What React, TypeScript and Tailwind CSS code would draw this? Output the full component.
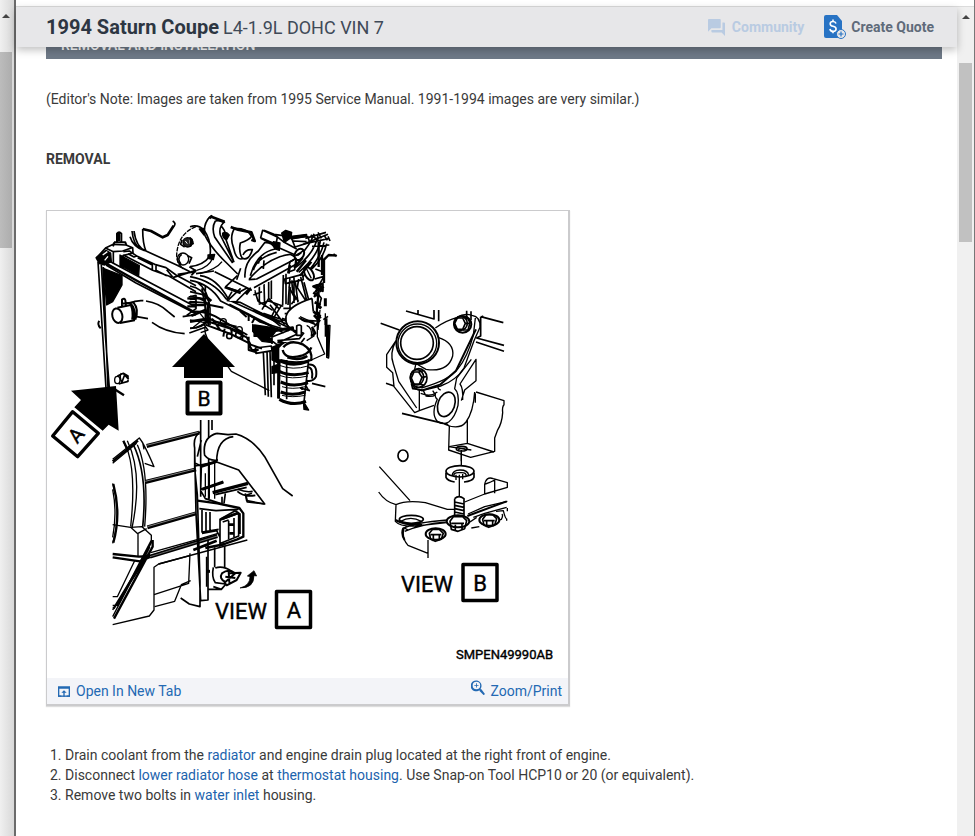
import type { ReactNode } from "react";

type PartProps = { x: number; y: number; children: ReactNode };

// Every part of the drawing is on its own grid, three units to a pixel
function Part({ x, y, children }: PartProps) {
  return (
    <g transform={`translate(${x} ${y}) scale(0.33333)`} strokeWidth={4}>
      {children}
    </g>
  );
}

function Radiator() {
  return (
    <Part x={46} y={205}>
      <path d="M213 110V86q6-8 13 0v24M204 112h34l3 8M205 112l-4 12M219 82v26" strokeWidth={6} />
      <path d="M152 158l28-30 22-10 38 2 20 8 1 16-30 8v30M180 130l22 10 28-2 28-10M202 140v35" strokeWidth={5} />
      <path d="M150 158l30-22 14 8 2 26-20 10-16-4z" fill="#000" />
      <path d="M170 150l14-10M176 166l10-12" stroke="#fff" strokeWidth={4} />
      <path d="M172 190l56 22v28l-14 25-14 25-18 10z" fill="#000" />
      <path d="M222 150l58 32-2 30-38-22-18-5z" fill="#000" />
      <path d="M156 170l14 220 10 160M166 180l12 210 12 160M172 186l14 364" strokeWidth={5} />
      <path d="M160 348q-8 10 4 22" strokeWidth={6} />
      <path d="M232 140l18-2 24 16 52 24 34 10 30 22 60 32M232 150l88 46 50 18 80 46M246 146l18 10 10-4M275 158l44 22v14M330 182v14l32 16M362 194l18 22" strokeWidth={5} />
      <path d="M185 166l265 140M180 180l90 54 180 92" strokeWidth={5} />
      <path d="M178 174l92 52 180 98" strokeWidth={7} />
      <path d="M290 72l25 6 35 19 15-7 18-28" strokeWidth={8} />
      <path d="M380 48q12 7 3 16M290 72q0 44 10 66M264 78q6 48 36 60l92 42 40 20M252 95q10 32 44 42M258 78q4 40 24 52" strokeWidth={5} />
      <path d="M450 65q-54 20-58 84 0 28 20 42" strokeDasharray="14 3" />
      <ellipse cx="425" cy="112" rx="14" ry="14" fill="#222" />
      <path d="M408 104l-4 14 12 8M436 102l6 16" strokeWidth={5} />
      <path d="M418 108l6 8M430 104l2 12" stroke="#fff" strokeWidth={3} />
      <ellipse cx="411" cy="162" rx="17" ry="18" />
      <path d="M405 178q-14-18 2-30M425 152l12 6-8 18M395 208l55-8M380 218l70-22M430 185l20 12-14 14" strokeWidth={5} />
      <ellipse cx="214" cy="332" rx="15" ry="22" transform="rotate(-14 214 332)" strokeWidth={6} />
      <path d="M214 308l40-8M222 354l44-8M250 292q24 22 14 56M262 292q18 20 6 52M228 304v-20q8-6 10 2l2 14M226 296l40-4" strokeWidth={6} />
      <path d="M256 300q8 20 4 44" strokeWidth={9} />
      <path d="M250 295q20-10 42-8M300 288q40 6 66 32l20 16M272 335l34 6M318 352q40 30 98 34M430 384l50-18M410 335l40-6M428 276l22-5v40l-28 20" strokeWidth={5} />
      <path d="M424 280l26 2M428 292h24M424 304h26" strokeWidth={7} />
    </Part>
  );
}

function Engine() {
  return (
    <Part x={190} y={205}>
      {/* fuel rail */}
      <path d="M0 215q70 12 108 66l196 90M0 226q60 10 92 62l190 96M0 243q38 6 56 46l-4 50M20 230q36 26 40 80v50M0 260l52 12M0 274l48 8M0 290l56 4M46 240v110M110 286l40 6 120 60M118 298l130 66" strokeWidth={5} />
      <path d="M0 282q40-10 54 20v50M0 320q40-4 76 14l96 56M0 370q36 0 60-28l90 40M150 318l20 18M176 330v18M196 336l-10 18M36 250l20 110M60 300l40 8" strokeWidth={6} />
      <circle cx="100" cy="350" r="9" />
      <circle cx="148" cy="374" r="9" />
      <path d="M4 300h44M4 332l44-18M40 268l24 20M0 350l60-10" strokeWidth={8} />
      <path d="M194 360l70 10-18 24h-54z" fill="#000" />
      {/* block and brackets */}
      <path d="M194 256l10 32 44 28M208 244v50M222 236l2 70M236 230v50l30 30M244 226v56M280 210l-2 90M288 206v92M190 270l26-10M206 298l30-10 44 16M236 280l-20 34M262 300l-20 40 30 24M280 310h24M284 326h20M276 340l24 8M300 246v80M250 340l24-38" strokeWidth={5} />
      <path d="M218 76l44 20-4 22-46-20zM212 100l46 22M222 76l30 12 44 6M250 120l20 10 46 20M260 94l20 16 40 22M305 100l48-6 6 18-44 14zM310 108l40 2" strokeWidth={5} />
      <path d="M250 110l20 4-2 22-18-6zM302 94l48-6-2 6-44 8z" fill="#000" />
      {/* covers under the runners */}
      <path d="M18 208l50-12 60 0 56 36 10 28-40 26-34 2-38-42z" fill="#fff" stroke="none" />
      <path d="M18 206l54-8M30 212q50 6 86 72M74 200l112 56M142 212l-34 32M152 250l-36 34M176 252l-36 36M106 246l44 14 22-12M112 284l14-24" strokeWidth={5} />
      <path d="M104 246l48 18M190 240l-22 28" strokeWidth={8} />
      {/* intake runners */}
      <path d="M60 35Q38 58 45 92q20 40 68 85l38 46 10-30-30-60-20-60-22-20z" fill="#fff" stroke="none" />
      <path d="M60 35Q38 58 45 92q20 40 68 85l30 30M76 48q-12 20-2 48l54 78M105 50q-20 14-14 40l40 80M92 62q16 14 14 36l26 74M76 48q12-4 24 4" strokeWidth={5} />
      <path d="M126 68q-14 30 0 66l16 60 20-34q-22-20-12-48l32-20-8-20z" fill="#fff" stroke="none" />
      <path d="M135 68q-18 26-4 62 8 40 30 30M135 70q40 0 50 24-8 12-34 20-6 28 6 46 20 8 30-26-20-2-28 16M152 190l-12 34" strokeWidth={5} />
      <path d="M165 222q-8-50 36-84l22-28q26 2 30 20l-8 30q60-24 72 2l-4 28-126 66z" fill="#fff" stroke="none" />
      <path d="M165 218q-4-48 40-80l20-26q24 0 30 20-56 12-74 80M190 196q10-38 70-54M178 222q56-66 122-74 24 8 18 30L192 248M176 224l24-2 112-58M205 176q2-12 10-20M222 166l-2 26" strokeWidth={5} />
      <path d="M60 34l44 16M122 66l22 8 40 8 10 26-10-4M58 40l10-8" strokeWidth={8} />
      {/* pulley on the left */}
      <path d="M0 65q24-8 42 10 24 34 18 78-20 28-60 32" strokeWidth={5} />
      <path d="M0 98q16 10 2 26zM54 150l20-2-4 16-16-4zM28 72l14-2v20z" fill="#000" />
      <path d="M98 84q12-6 20 6l-8 14q-14-4-12-20zM275 84l12-8 18 6-2 16-20 14z" fill="#000" />
      <path d="M20 196q36-8 48-36M30 206q50-14 66-36" strokeWidth={4} />
      {/* wiring loom */}
      <path d="M384 92q-10 54-68 96M392 104q-8 50-66 98M402 112q-12 54-64 104M372 86q-14 40-52 76M410 116q-10 48-54 84M340 118l74-30M346 100l62-18M356 114l62-14M366 124l52-4M362 90l24 16M384 82l10 18M402 90l10 16M414 94l6 14" strokeWidth={5} />
      <ellipse cx="328" cy="148" rx="13" ry="18" transform="rotate(30 328 148)" fill="#fff" strokeWidth={6} />
      <ellipse cx="357" cy="206" rx="12" ry="22" transform="rotate(-30 357 206)" fill="#fff" strokeWidth={6} />
      <path d="M350 192l14 28M322 152l12-8" />
      <path d="M316 152q20-10 24-16M300 170l18-10-4 34-20 8zM284 222l54-14 2 16-54 12zM300 216l-6 84M312 214v80M326 222l-4 26 26 40M316 232l8 60M332 216l18 70M296 244l20 38-12 16M306 226q-2 40 20 64M342 232l16 60M376 192l26 10v30M374 222l28-8-26 46 26-14M380 262l14 18-8 30" strokeWidth={5} />
      <path d="M440 152l-24-2-14 14v70M430 148l10 6M386 110v76M396 150v60M370 244l28-8v22zM372 276l14-16-6 60 12 20" strokeWidth={7} />
      <path d="M300 180l-4 26M312 188l26-30M320 200l28-34M330 212l34-42" strokeWidth={7} />
      <path d="M406 280v24M408 340v20M414 360v30M388 236l8 20M380 300l14 10" strokeWidth={9} />
      <path d="M366 280q-70 22-78 54-4 34 24 42l66-2 4-40z" fill="#fff" stroke="none" />
      <path d="M366 280q-70 22-78 54-4 34 24 40M326 338l60 24M366 280l4 40M346 346l36 2M386 320v30l-14 16M330 340q16 14 40 10M400 344l14-10" strokeWidth={5} />
      <path d="M376 240l18 20M370 262l18 14M374 292l18 8M370 320l22 14M372 330l18 20M244 378l64-10v22" strokeWidth={8} />
    </Part>
  );
}

function RadiatorEnd() {
  return (
    <Part x={190} y={320}>
      <path d="M18 24l22-12 14 18-22 8M44 22q0 38 34 66l46 66 114 58M0 0l46 8M10 22L40-2M30-20l24 30" strokeWidth={4} />
      <path d="M40 0l80 26 50 26 12 22 34 12M46 14l76 28 52 26 12 22h20M116 22q12 4 8 22M150 34q12 6 6 24M176 50v40l26 8M104 26l-4 24M80 6l60 14M66-4l26 36" strokeWidth={6} />
      <circle cx="118" cy="48" r="8" strokeWidth={5} />
      <circle cx="146" cy="44" r="9" strokeWidth={5} />
      <path d="M188 14l54 24 4 30-30-4-28-30z" fill="#000" />
      <path d="M196 84l48-6 2 14-48 8zM220 96l6 130M231 92l4 138M240 94l4 138M252 96v100M264 84v150" strokeWidth={5} />
      <path d="M262 62l66-6 14-18-20-12-58 20-24 6z" fill="#fff" stroke="none" />
      <path d="M240 36l64-10M244 52l60-24 18 14-58 26M262 62l66-6 14-18M262 68l70 2 12-16M302 28l40 12M240 58l26 20M246 36v36" strokeWidth={5} />
      <path d="M320 46V18q8-6 14 0v28z" fill="#fff" strokeWidth={5} />
      <path d="M170-20l40 26 86 26M190-30l100 42 10 14M220-20l70 24M240-46l44 60" strokeWidth={5} />
      <path d="M246 82l34-14v50l-14 12-20-10zM246 140l16-6v24l-16 2zM340 244l16 26-14-2z" fill="#000" />
      {/* ribbed tank */}
      <path d="M268 84q20-28 66-16 36 10 30 48l-8 10-10 116q-40 16-78-6z" fill="#fff" stroke="none" />
      <path d="M280 82q20-26 60-8 28 16 24 46-44 14-92 0M278 90q8 32 60 16 20-8 26-24M292 112q36 12 60-4" strokeWidth={7} />
      <path d="M268 122q40 20 86 2M268 154q36 18 88 4M272 186l16 6q30 8 66-4M272 216q34 14 74 0M268 238q40 22 80 6" strokeWidth={9} />
      <path d="M268 136q40 16 86 2M268 166q36 14 86 2M276 200q30 10 70 0M276 226q30 8 70 0" strokeWidth={3} />
      <path d="M268 118l-2 118" strokeWidth={8} />
      <path d="M356 118l-14 128M290 120v118M352 180l-2 14M366 190l40 10M330 204l30 8M346 194l10 18M336 200v10" strokeWidth={5} />
      <path d="M354 134q30-4 24 36-8 16-28 12M354 142q16 0 12 34" strokeWidth={6} />
      {/* bracket on the right */}
      <path d="M382-40v90l22 52-40 18M390-30l-6 60M406-20v70M410 16h10l-4 98-6-2zM350 16q18 8 14 34M366 24l6 24-22 14M330-10l44 20" />
      <path d="M366 20l10 20-12 8M414 20v90" strokeWidth={7} />
    </Part>
  );
}

function Arrows() {
  return (
    <>
      <Part x={46} y={330}>
        <path d="M75 182l135-14 8 134-30-18-18 18-85-70 20-22z" fill="#000" stroke="none" />
        <path d="M80 245l77 65-62 70-75-62z" strokeWidth={10} />
        <ellipse cx="214" cy="150" rx="8" ry="11" />
        <path d="M214 138l18-8 14 8v16l-28 8M226 130q-8 10 2 28M236 134l-8 22M232 130l16 18" strokeWidth={5} />
        <path d="M206 178l28 18" strokeWidth={7} />
      </Part>
      <path d="M204 334l31 33h-12v11h-39v-11h-12z" fill="#000" stroke="none" />
      <rect x="187.500" y="382.500" width="33" height="31" strokeWidth={4} />
    </>
  );
}

function ViewA() {
  return (
    <Part x={100} y={430}>
      {/* fan shroud */}
      <path d="M38 88L118 24l10 14M38 100L110 40M118 24q14 16 44 86l-28-10M128 38l4 20M70 34l14 30q24 76 8 226M82 32q48 100 14 262M112 44q36 80 22 246M38 160q28 90 0 180M38 178q14 70 0 144" />
      <path d="M70 32l14 30M38 94L114 32M40 162q24 90 0 176" strokeWidth={7} />
      <path d="M100 44q44 90 28 248" strokeWidth={5} />
      <path d="M38 284l54 8 22 20v66M92 292l34-2 28 26v22L38 560M38 584l110-26 14-18V412l14-10 266-72M114 310l26-14M154 330L52 526H38M104 392L52 500H38M130 398L38 540" />
      <path d="M38 372l78 8 36-2M38 382l82 12 32-14M148 350l-24 50L42 534H38M158 330v20L42 566" strokeWidth={7} />
      {/* radiator fins */}
      <path d="M140 48L298 8M136 156l152-38M142 292l146-42" strokeWidth={12} />
      <path d="M140 46L298 6M136 154l152-38M142 290l146-42" stroke="#bbb" strokeWidth={2} />
      <path d="M150 380l202-62" strokeWidth={12} />
      <path d="M150 380l202-62" stroke="#999" strokeWidth={2} />
      <path d="M152 368l142-40 60-18" />
      {/* side tank */}
      <path d="M302-30v230M326-30v240M336-30v30M302 4q-24 16-18 50v60l8 80 8 260v76l-32-8-26-18M284 60l4 190 14 262 22-2V330M292 80l12-50M286 108l70-14M302 178l68-22M286 100l18 8-2 74 14 24 56 18" strokeWidth={5} />
      <path d="M302 110l56-18M306 178l64-22" strokeWidth={9} />
      <path d="M316 130v70M328 96v110M344 86v120M270 370l-4 90-104 34M176 402l96-26M164 530l60-16 20-50 28-12" />
      {/* upper hose */}
      <path d="M350 10q-44 12-36 66 14 18 40 14l-4 6 66 24 34 44 106-30-36-70-36-40-50-12z" fill="#fff" stroke="none" />
      <path d="M350 10q-44 12-36 66 14 18 40 14M350 10l34 4 24-2q50 14 86 68l54 96 30 22M400 20q-50 6-50 76l66 24 34 44 44 58-52-6-4-20 18-6M346 194l94-22" strokeWidth={5} />
      <path d="M338 188l106-28" strokeWidth={10} />
      <path d="M412 184q20 18 54 12M414 178q24 10 44 6M436 190l4 22 54 10" strokeWidth={5} />
      {/* bracket */}
      <path d="M292 212l60 8 66 14 12 16v70l-18 8-56 20" strokeWidth={7} />
      <path d="M298 236l50 6 66-4-54 30v74M306 240v66l50-8M362 270l54-20v68l-54 22M306 310l44-8 10 20M330 246v58M366 200v20M376 190l-4 30M400 238l20 14v60M318 246v58" strokeWidth={5} />
      <path d="M368 276l18-6M386 272v56M402 264v58" strokeWidth={5} />
      <path d="M386 284h16M388 310h14M280 360l70-28M316 354l60-12" strokeWidth={8} />
      <path d="M366 266l50-18" strokeWidth={8} />
      {/* drain valve */}
      <path d="M344 352v60M374 348v64M320 380v90M340 470l24 8 14-16M324 478h40M340 412q-6 30 6 46l30 4M346 414q22-8 50 10" strokeWidth={5} />
      <path d="M366 430q20-16 40 0l-30 26q-20-10-10-26zM388 430l34-2-12 22-30 16-8-10M376 440l30 4M386 424l2 34" strokeWidth={6} />
      <path d="M320 424h10" strokeWidth={9} />
      <path d="M420 474q30-8 30-34l-8-2 20-16 8 16-8-1q0 38-42 37z" fill="#000" strokeWidth={2} />
    </Part>
  );
}

function ViewB() {
  return (
    <>
      <Part x={370} y={300}>
        <path d="M108 33l84 24V30M144 30v14M206 30v34M32 70l56 20M290 32v26M303 34v26M48 250l24 8M96 340l124 30" strokeWidth={5} />
        <ellipse cx="143" cy="128" rx="64" ry="64" strokeWidth={6} />
        <ellipse cx="142" cy="130" rx="58" ry="58" strokeWidth={4} />
        <ellipse cx="141" cy="129" rx="49" ry="49" strokeWidth={5} />
        <path d="M196 84q30-22 66-32 20-14 44-6 26 4 24 36l-18 40-30 82q-24 38-70 54l-56 14q-26-4-30-20M316 54l-6 52q-18 66-46 100-24 34-110 58M204 112q50 16 44 56-14 50-80 40l-28-16M78 122l-28 42v38l18 16 4 42 62 78 14-6 44-16M78 122q-20 38-8 70l16 52 54 80M148 270v62M138 190l-4 18" />
        <path d="M154 272l56-18 48-42 48-100 12-24" strokeWidth={6} />
        {/* flange bolts */}
        <ellipse cx="278" cy="73" rx="26" ry="25" strokeWidth={6} />
        <ellipse cx="272" cy="70" rx="20" ry="21" strokeWidth={5} />
        <path d="M262 54h16l8 16-8 18h-16l-8-18zM278 54l12-4 10 18-6 22-16 0M286 70h14" strokeWidth={5} />
        <ellipse cx="146" cy="234" rx="25" ry="28" strokeWidth={5} />
        <ellipse cx="141" cy="232" rx="20" ry="23" strokeWidth={5} />
        <path d="M132 216h14l10 16-8 20h-16l-8-18zM146 216l14-4M156 232l12-2M148 252l14 4M124 250l4 16 30 4" strokeWidth={5} />
        {/* housing neck */}
        <path d="M332 50l68 18M332 50v58l-12 6 82 22M318 126l84 28M330 54l10-6" strokeWidth={5} />
        <ellipse cx="229" cy="313" rx="25" ry="38" transform="rotate(20 229 313)" strokeWidth={5} />
        <path d="M196 280q-2 12 6 18-20 44 0 66 18 12 34 2 20-16 28-50 4-38-10-50l6-32 44-56M206 256q-6 10 6 14M278 300q2-36-8-48l48-74v64l-34 28-10 32M160 272l8 16q20 4 28-4l-8-12M152 280q30 12 50-4M222 372q46 20 66-6 22-30 26-90M318 276l84 26v12q-6 6-4 24-2 32-16 54l-8 22v40l-72 18-66-22 2-70-10-12M292 358v72l-54 10M292 430l80 26M316 280v28M236 440l68 10" />
        <ellipse cx="275" cy="446" rx="16" ry="7" strokeWidth={5} />
        <path d="M264 450q12-10 24 0M274 450v34" strokeWidth={4} />
      </Part>
      <Part x={370} y={440}>
        <ellipse cx="99" cy="47" rx="15" ry="17" strokeWidth={5} />
        <path d="M274 36v40M268 104v66M258 104v16M278 102v16" />
        <path d="M312 98v14q-4 12-30 14M228 98v14q4 10 26 14" strokeWidth={5} />
        <ellipse cx="270" cy="94" rx="42" ry="17" strokeWidth={5} />
        <path d="M252 110q-4-14 18-12 22-2 18 12M246 108q2-18 24-18 24 0 26 16" strokeWidth={4} />
        {/* bracket */}
        <path d="M28 80l92 102M26 156q20 30 52 38M78 194q30-14 88-6l66 20h20M284 186l60-24 68-20v-14l-42-12q-22-8-26 18v30M346 132q18-6 28-12v40M78 194l-2 50q14 16 60 14l94-10M102 264q30-16 130-24M104 274q50-22 128-28M102 264q-8 30 12 52l60 24M294 222l50-22 68-16M310 232l34-12 66-18M174 300v54" />
        <path d="M292 228l118-44M100 264q-8 18 4 36M76 240q30 16 80 14" strokeWidth={6} />
        <ellipse cx="124" cy="238" rx="36" ry="12" strokeWidth={5} />
        <path d="M92 244q30-18 62 0M100 262l14 8M304 264l24-4M300 246l20-14M378 214l22-2q6 26 12 26M372 244l22-6q6-10 2-16M412 204v10M410 236v6" strokeWidth={4} />
        {/* stud */}
        <path d="M254 176q12-12 28 0v54h-28z" fill="#fff" stroke="none" />
        <path d="M254 176q12-12 28 0v54M254 176v54M254 186l28 6M254 196l28 6M254 206l28 6M254 216l28 6" strokeWidth={5} />
        {/* lower bolts */}
        <ellipse cx="264" cy="244" rx="34" ry="18" fill="#fff" strokeWidth={6} />
        <path d="M240 244l10-14h28l12 12-6 24-20 8-20-6zM244 250h38M256 254v18M276 252v18" strokeWidth={5} />
        <ellipse cx="197" cy="282" rx="30" ry="17" fill="#fff" strokeWidth={6} />
        <path d="M178 280l10-12h20l12 12-6 18-18 6-14-6zM182 284h32M190 286v18M208 286v16" strokeWidth={5} />
        <ellipse cx="358" cy="240" rx="30" ry="17" fill="#fff" strokeWidth={6} />
        <path d="M338 238l10-14h20l12 12-6 20-18 6-14-6zM342 242h32M350 244v18M368 244v16" strokeWidth={5} />
      </Part>
    </>
  );
}

function Diagram() {
  return (
    <svg
      viewBox="47 211 521 467"
      className="block h-auto w-full"
      role="img"
      aria-label="Radiator hose and thermostat housing removal"
      fill="none"
      stroke="#000"
      strokeLinejoin="round"
    >
      <Radiator />
      <Engine />
      <RadiatorEnd />
      <ViewA />
      <ViewB />
      <Arrows />
      <rect x="276.500" y="591.500" width="34" height="36" strokeWidth={3.500} />
      <rect x="463" y="564.500" width="34" height="36" strokeWidth={3.500} />
      <g className="font-['Roboto',sans-serif]" fill="#000" stroke="#000" strokeWidth={0.4}>
        <text x="215" y="619" fontSize="22">VIEW</text>
        <text x="401" y="592" fontSize="22">VIEW</text>
        <text x="294" y="618" fontSize="22" textAnchor="middle">A</text>
        <text x="480" y="591" fontSize="22" textAnchor="middle">B</text>
        <text x="204" y="406" fontSize="21" textAnchor="middle">B</text>
        <text x="0" y="7" fontSize="20" textAnchor="middle" transform="translate(76 435) rotate(-50)">A</text>
        <text x="456" y="659" fontSize="13">SMPEN49990AB</text>
      </g>
    </svg>
  );
}

function ScrollArrow() {
  return (
    <svg viewBox="0 0 8 4" className="h-1 w-2" fill="#444" aria-hidden="true">
      <path d="M4 0l4 4H0z" />
    </svg>
  );
}

function QuoteIcon() {
  return (
    <svg viewBox="0 0 22 25" className="h-[25px] w-[22px]" aria-hidden="true">
      <path d="M2 0h11l5 6v15a2 2 0 0 1-2 2H2a2 2 0 0 1-2-2V2a2 2 0 0 1 2-2z" fill="#2873c4" />
      <path d="M12 8.500q-.6-2-3-2-2.800 0-2.800 2.200 0 2 2.900 2.600 3 .6 3 2.800 0 2.300-3 2.300-2.800 0-3.200-2.400M9 4.500v2M9 16.300v2" stroke="#fff" strokeWidth="1.600" fill="none" />
      <circle cx="17" cy="19" r="4.500" fill="#e7e7e9" stroke="#2873c4" />
      <path d="M17 16.500v5M14.500 19h5" stroke="#2873c4" strokeWidth="1.200" />
    </svg>
  );
}

function Header() {
  return (
    <header className="relative z-10 flex h-10 items-center justify-between bg-[#e7e7e9] pr-[23px] pl-[30px] shadow-[0_3px_8px_rgba(0,0,0,0.25)]">
      <h1 className="flex items-baseline gap-1 text-[#2d3642]">
        <span className="text-[20px] font-bold">1994 Saturn Coupe</span>
        <span className="text-[18px] text-[#3f4a58]">L4-1.9L DOHC VIN 7</span>
      </h1>
      <div className="flex items-center gap-5 text-[14px] font-bold">
        <button type="button" disabled className="flex items-center gap-[7px] text-[#b9cbe2]">
          <svg viewBox="2 2 20 20" className="h-[17px] w-[17px]" fill="currentColor" aria-hidden="true">
            <path d="M21 6h-2v9H6v2c0 .55.45 1 1 1h11l4 4V7c0-.55-.45-1-1-1zm-4 6V3c0-.55-.45-1-1-1H3c-.55 0-1 .45-1 1v14l4-4h10c.55 0 1-.45 1-1z" />
          </svg>
          Community
        </button>
        <button type="button" className="flex items-center gap-[5px] text-[#5f6b7a]">
          <QuoteIcon />
          Create Quote
        </button>
      </div>
    </header>
  );
}

function Figure() {
  return (
    <figure className="w-[524px] max-w-full border-t border-r-2 border-b-2 border-l border-[#cbcbcd] shadow-[0_1px_1px_#ddd]">
      <Diagram />
      <figcaption className="flex h-[26px] items-center justify-between bg-[#f3f4f8] pr-[6px] pl-[11px] text-[14px] text-[#2369b3]">
        <a href="#figure" className="flex items-center gap-[6px]">
          <svg viewBox="3 4 18 16" className="h-[11px] w-3" fill="currentColor" aria-hidden="true">
            <path d="M3 4h18v16h-5v-2h3V8H5v10h3v2H3zm9 6-4 4h3v6h2v-6h3z" />
            <path d="M3 18h18v2H3z" />
          </svg>
          Open In New Tab
        </a>
        <a href="#zoom" className="flex items-center gap-1">
          <svg viewBox="3 3 18 18" className="mb-2 h-[15px] w-[15px]" fill="currentColor" aria-hidden="true">
            <path d="M15.500 14h-.79l-.28-.27A6.500 6.500 0 1 0 13 15.200l.27.28v.79l5 4.990L19.750 19.800zm-6 0a4.500 4.500 0 1 1 0-9 4.500 4.500 0 0 1 0 9zm.5-7H9v2H7v1h2v2h1v-2h2V9h-2z" />
          </svg>
          Zoom/Print
        </a>
      </figcaption>
    </figure>
  );
}

function Term({ children }: { children: ReactNode }) {
  return (
    <a href="#term" className="text-[#1c63ad]">
      {children}
    </a>
  );
}

export default function App() {
  return (
    <div className="flex min-h-screen bg-white font-['Roboto',sans-serif] text-[#3a3a3a]">
      {/* outer pane's scrollbar */}
      <div className="w-4 shrink-0 border-r-2 border-[#6b6b6b] bg-linear-to-r from-[#f0f0f0] to-[#d8d8d8] pr-[2px]">
        <div className="flex h-[52px] items-start pt-[14px] pl-[2px]">
          <ScrollArrow />
        </div>
        <div className="h-[196px] bg-linear-to-r from-[#bcbcbc] to-[#adadad]" />
      </div>

      <div className="flex min-w-0 flex-1 flex-col border-r border-[#777]">
        <div className="h-[7px] border-b border-[#dcdcdc]" />
        <div className="flex flex-1">
          <div className="min-w-0 flex-1">
            <Header />
            <main className="pr-[15px] pl-[30px] text-[14px] leading-5">
              <h2 className="-mt-3 flex h-6 items-start bg-[#6e7987] pl-[15px] text-[14px] leading-5 font-medium text-white">
                REMOVAL AND INSTALLATION
              </h2>
              <p className="mt-[30px]">
                (Editor's Note: Images are taken from 1995 Service Manual. 1991-1994 images are very similar.)
              </p>
              <h3 className="mt-10 mb-[41px] font-bold">REMOVAL</h3>
              <Figure />
              <ol className="mt-[39px] list-inside list-decimal pl-1">
                <li>
                  Drain coolant from the <Term>radiator</Term> and engine drain plug located at the right front of engine.
                </li>
                <li>
                  Disconnect <Term>lower radiator hose</Term> at <Term>thermostat housing</Term>. Use Snap-on Tool HCP10
                  or 20 (or equivalent).
                </li>
                <li>
                  Remove two bolts in <Term>water inlet</Term> housing.
                </li>
              </ol>
            </main>
          </div>
          <div className="w-[17px] shrink-0 bg-[#f0f0f0] px-[2px]">
            <div className="flex h-14 justify-center pt-2">
              <ScrollArrow />
            </div>
            <div className="h-[179px] bg-[#c1c1c1]" />
          </div>
        </div>
      </div>
    </div>
  );
}
